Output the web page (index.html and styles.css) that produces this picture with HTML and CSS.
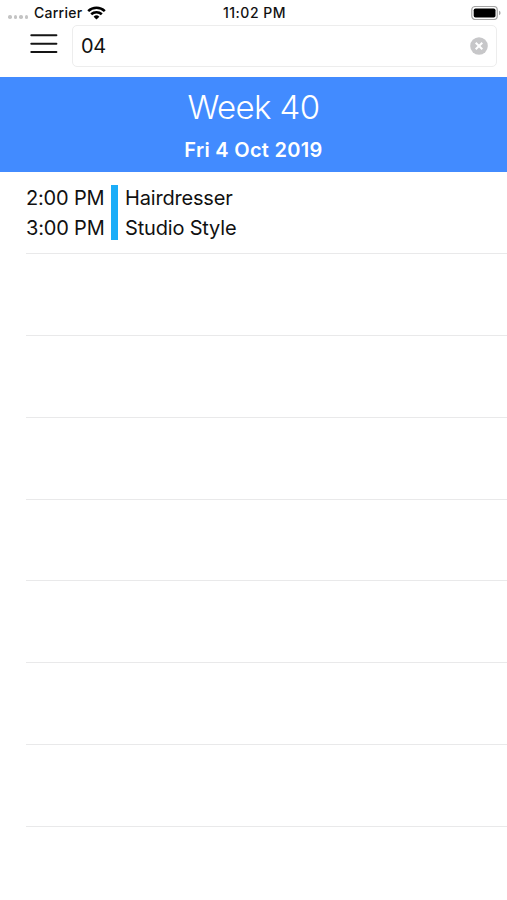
FILE: index.html
```html
<!DOCTYPE html>
<html lang="en"><head><meta charset="utf-8"><title>Week</title><link rel="stylesheet" href="styles.css"></head>
<body>
<div class="status">
<div class="left"><span class="dots"><i></i><i></i><i></i><i></i></span><span class="carrier">Carrier</span>
<svg class="wifi" width="19" height="14" viewBox="0 0 19 14"><path d="M9.5 13.6 6.6 10.7a4.2 4.2 0 0 1 5.8 0Z"/><path class="arc" d="M4.2 8.3a7.8 7.8 0 0 1 10.6 0M1.2 5.1a12 12 0 0 1 16.6 0"/></svg></div>
<span class="time">11:02 PM</span>
<svg class="battery" width="30" height="14" viewBox="0 0 30 14"><rect class="shell" x=".75" y=".5" width="25.5" height="13" rx="3.5"/><rect x="2.7" y="2.4" width="21.8" height="9.2" rx="1.8"/><path class="tip" d="M28 4.8q1.6.6 1.6 2.2T28 9.2Z"/></svg>
</div>
<div class="toolbar">
<svg class="menu" width="28" height="20" viewBox="0 0 28 20"><path d="M1.3 1.2h25.1M1.3 9.7h25.1M1.3 18.1h25.1"/></svg>
<div class="search"><span class="query">04</span><svg class="clear" width="18" height="18" viewBox="0 0 18 18"><circle cx="9" cy="9" r="8.8"/><path d="m5.7 5.7 6.6 6.6m0-6.6-6.6 6.6"/></svg></div>
</div>
<header><h1>Week 40</h1><h2>Fri 4 Oct 2019</h2></header>
<main>
<div class="row event"><div class="times"><div>2:00 PM</div><div>3:00 PM</div></div><div class="bar"></div><div class="title"><div>Hairdresser</div><div>Studio Style</div></div></div>
<div class="row"></div><div class="row"></div><div class="row"></div><div class="row"></div><div class="row"></div><div class="row"></div><div class="row"></div>
</main>
</body></html>
```
FILE: styles.css
```css
*{box-sizing:border-box}
body{margin:0;height:900px;overflow:hidden;background:#fff;color:#111;font-family:Inter,sans-serif}
svg{display:block}
.status{height:25px;display:grid;grid-template-columns:1fr auto 1fr;align-items:center;padding:0 6px 0 8px;font-size:14px;font-weight:500;letter-spacing:.25px}
.time{font-size:14px;letter-spacing:.5px}
.left{display:flex;align-items:center}
.dots{display:flex;gap:2px;width:26px;padding-top:9px}
.dots i{width:3.6px;height:3.6px;border-radius:50%;background:#c4c4c4}
.wifi{margin-left:5px}
.arc{fill:none;stroke:#000;stroke-width:2.6}
.battery{justify-self:end}
.shell{fill:none;stroke:#a5a5a5;stroke-width:1.2}
.tip{fill:#a5a5a5}
.toolbar{height:52px;display:flex;align-items:flex-start;padding:0 10px 0 30px}
.menu{margin:9px 14px 0 0;fill:none;stroke:#151515;stroke-width:2;stroke-linecap:round}
.search{height:42px;flex:1;border:1px solid #ededed;border-radius:5px;display:flex;align-items:center;justify-content:space-between;padding:0 8px;font-size:20px;letter-spacing:-.4px}
.clear circle{fill:#c7c7c9}
.clear path{stroke:#fff;stroke-width:2}
header{height:95px;background:#428bff;color:#fff;text-align:center;padding-top:10px}
h1,h2{margin:0}
h1{font-size:33px;line-height:41px;font-weight:300;letter-spacing:-.6px}
h2{font-size:20px;line-height:24px;font-weight:600;margin-top:10px;letter-spacing:.3px}
main{padding-left:26px}
.row{height:81.9px;border-bottom:1px solid #e9e9ea}
.event{display:flex;padding-top:13px;font-size:20px;line-height:30px;letter-spacing:-.18px}
.times{width:85px;margin-top:-2px;white-space:nowrap}
.title{margin-top:-2px}
.bar{width:7px;height:55px;margin-right:7px;background:#1badf8}
```
